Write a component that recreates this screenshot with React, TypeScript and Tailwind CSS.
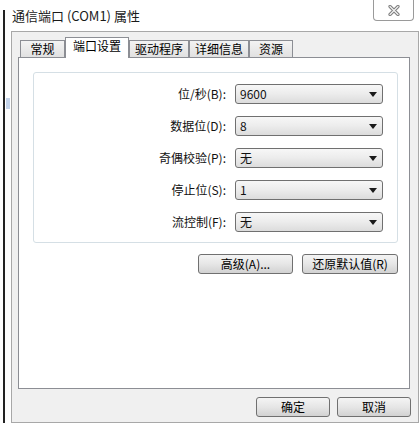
import React from 'react';

const font = { fontFamily: '"Noto Sans CJK SC", "Liberation Sans", sans-serif' };

const rows = [
  { label: '位/秒(B):', value: '9600' },
  { label: '数据位(D):', value: '8' },
  { label: '奇偶校验(P):', value: '无' },
  { label: '停止位(S):', value: '1' },
  { label: '流控制(F):', value: '无' },
];

const tabs = [
  { label: '常规', w: 'w-[45px]' },
  { label: '端口设置', w: 'w-[64px]', active: true },
  { label: '驱动程序', w: 'w-[60px]' },
  { label: '详细信息', w: 'w-[60px]' },
  { label: '资源', w: 'w-[44px]' },
];

const Combo: React.FC<{ value: string }> = ({ value }) => (
  <div className="w-[148px] h-[20px] flex items-center justify-between pl-[4px] pr-[5px] border border-[#707070] rounded-[3px] bg-gradient-to-b from-[#f7f7f7] via-[#ececec] to-[#dcdcdc] text-[12px] text-[#111] leading-none">
    <span>{value}</span>
    <svg width="8" height="5" viewBox="0 0 8 5">
      <path d="M0 0 H8 L4 5 Z" fill="#1a1a1a" />
    </svg>
  </div>
);

const Button: React.FC<{ label: string; w: string }> = ({ label, w }) => (
  <div className={`${w} h-[20px] flex items-center justify-center border border-[#707070] rounded-[3px] bg-gradient-to-b from-[#f4f4f4] via-[#e6e6e6] to-[#d2d2d2] text-[12px] text-black leading-none`}>
    {label}
  </div>
);

export default function App() {
  return (
    <div className="w-[420px] h-[427px] bg-white flex overflow-hidden" style={font}>
      {/* left window edge */}
      <div className="w-[11px] flex items-start">
        <div className="mt-[10px] ml-[3px] w-[2px] h-[413px] bg-[#222]" />
        <div className="mt-[98px] ml-[1px] w-[4px] h-[11px] bg-[#c3d3ea]" />
      </div>

      <div className="flex flex-col w-[408px]">
        {/* title bar */}
        <div className="h-[31px] flex items-start justify-between">
          <div className="mt-[9px] ml-[1px] text-[13px] text-[#1a1a1a] leading-none">通信端口 (COM1) 属性</div>
          <div className="mr-[5px] w-[41px] h-[21px] border border-t-0 border-[#9a9a9a] rounded-b-[4px] flex items-center justify-center">
            <svg width="12" height="11" viewBox="0 0 12 11">
              <path d="M2 1.5 L10 9.5 M10 1.5 L2 9.5" stroke="#7d7d7d" strokeWidth="3.2" strokeLinecap="round" />
              <path d="M2 1.5 L10 9.5 M10 1.5 L2 9.5" stroke="#f4f4f4" strokeWidth="1.2" strokeLinecap="round" />
            </svg>
          </div>
        </div>

        {/* dialog body */}
        <div className="h-[392px] bg-[#f0f0f0] border border-[#a8a8a8] flex flex-col">
          <div className="ml-[6px] mt-[5px] w-[392px] flex flex-col">
            {/* tabs */}
            <div className="h-[20px] flex items-end pl-[2px]">
              {tabs.map((t) =>
                t.active ? (
                  <div
                    key={t.label}
                    className={`${t.w} h-[21px] -mb-px relative z-10 bg-white border border-b-0 border-[#8c8e94] flex items-start justify-center pt-[2px] text-[12px] leading-none text-black`}
                  >
                    {t.label}
                  </div>
                ) : (
                  <div
                    key={t.label}
                    className={`${t.w} h-[17px] bg-gradient-to-b from-[#f3f3f3] to-[#e1e1e1] border border-b-0 border-[#8c8e94] flex items-center justify-center text-[12px] leading-none text-black`}
                  >
                    {t.label}
                  </div>
                )
              )}
            </div>

            {/* tab page */}
            <div className="h-[332px] bg-white border border-[#8c8e94] flex flex-col">
              <div className="mt-[14px] ml-[14px] w-[365px] h-[171px] border border-[#d5dfe5] rounded-[3px] flex flex-col gap-[12px] pt-[11px] pr-[14px]">
                {rows.map((r) => (
                  <div key={r.label} className="flex items-center justify-end gap-[9px]">
                    <span className="text-[12px] leading-none text-[#111]">{r.label}</span>
                    <Combo value={r.value} />
                  </div>
                ))}
              </div>
              <div className="mt-[11px] ml-[14px] w-[365px] flex justify-end gap-[9px]">
                <Button label="高级(A)..." w="w-[95px]" />
                <Button label="还原默认值(R)" w="w-[96px]" />
              </div>
            </div>
          </div>

          {/* ok / cancel */}
          <div className="mt-[8px] mr-[7px] flex justify-end gap-[7px]">
            <Button label="确定" w="w-[74px]" />
            <Button label="取消" w="w-[74px]" />
          </div>
        </div>
      </div>
    </div>
  );
}
